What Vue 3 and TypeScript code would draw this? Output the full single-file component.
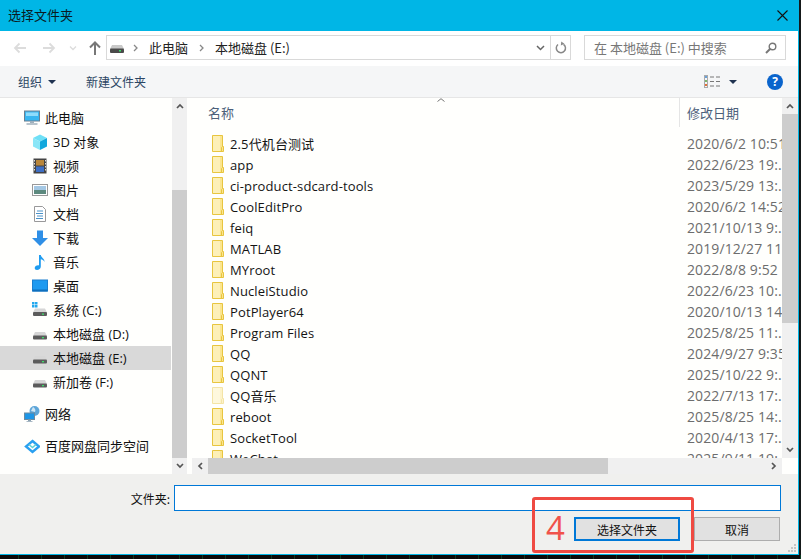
<script setup lang="ts">
interface NavItem { label: string; icon: string; indent: boolean; gap?: boolean; selected?: boolean }
const navItems: NavItem[] = [
  { label: '此电脑', icon: 'pc', indent: false },
  { label: '3D 对象', icon: 'cube', indent: true },
  { label: '视频', icon: 'film', indent: true },
  { label: '图片', icon: 'pic', indent: true },
  { label: '文档', icon: 'doc', indent: true },
  { label: '下载', icon: 'down', indent: true },
  { label: '音乐', icon: 'music', indent: true },
  { label: '桌面', icon: 'desk', indent: true },
  { label: '系统 (C:)', icon: 'sys', indent: true },
  { label: '本地磁盘 (D:)', icon: 'drive', indent: true },
  { label: '本地磁盘 (E:)', icon: 'drive', indent: true, selected: true },
  { label: '新加卷 (F:)', icon: 'drive', indent: true },
  { label: '网络', icon: 'net', indent: false, gap: true },
  { label: '百度网盘同步空间', icon: 'baidu', indent: false, gap: true },
]
interface FileRow { name: string; date: string; faded?: boolean }
const files: FileRow[] = [
  { name: '2.5代机台测试', date: '2020/6/2 10:51' },
  { name: 'app', date: '2022/6/23 19:..' },
  { name: 'ci-product-sdcard-tools', date: '2023/5/29 13:..' },
  { name: 'CoolEditPro', date: '2020/6/2 14:52' },
  { name: 'feiq', date: '2021/10/13 9:..' },
  { name: 'MATLAB', date: '2019/12/27 11..' },
  { name: 'MYroot', date: '2022/8/8 9:52' },
  { name: 'NucleiStudio', date: '2022/6/23 10:..' },
  { name: 'PotPlayer64', date: '2020/10/13 14..' },
  { name: 'Program Files', date: '2025/8/25 11:..' },
  { name: 'QQ', date: '2024/9/27 9:35' },
  { name: 'QQNT', date: '2025/10/22 9:..' },
  { name: 'QQ音乐', date: '2022/7/13 17:..', faded: true },
  { name: 'reboot', date: '2025/8/25 14:..' },
  { name: 'SocketTool', date: '2020/4/13 17:..' },
  { name: 'WeChat', date: '2025/9/11 19:..' },
]
</script>

<template>
  <div class="desk">
    <div class="win">
      <header class="title">
        <span class="title-text">选择文件夹</span>
        <svg class="close" width="11" height="11" viewBox="0 0 11 11"><path d="M0.500 0.500l10 10M10.500 0.500l-10 10" stroke="#111" stroke-width="1.100" fill="none" /></svg>
      </header>

      <div class="nav">
        <svg class="nav-arrow" width="13" height="12" viewBox="0 0 13 12"><path d="M13 6H2M6.500 1.500L2 6l4.500 4.500" stroke="#dcdcdc" stroke-width="1.800" fill="none" /></svg>
        <svg class="nav-arrow fwd" width="13" height="12" viewBox="0 0 13 12"><path d="M0 6h11M6.500 1.500L11 6l-4.500 4.500" stroke="#dcdcdc" stroke-width="1.800" fill="none" /></svg>
        <svg class="nav-chev" width="8" height="6" viewBox="0 0 8 6"><path d="M1 1.500L4 4.500l3-3" stroke="#dcdcdc" stroke-width="1.300" fill="none" /></svg>
        <svg class="nav-up" width="12" height="14" viewBox="0 0 12 14"><path d="M6 14V2M1 6.500l5-5 5 5" stroke="#777" stroke-width="2" fill="none" /></svg>
        <div class="address">
          <svg class="addr-drive" width="14" height="8" viewBox="0 0 14 8"><path d="M2 0h10l2 4H0z" fill="#c9c9c9" /><rect y="3.500" width="14" height="4.500" rx="1" fill="#4a4a4a" /><rect x="9" y="5" width="2" height="1.500" fill="#3ddc6a" /></svg>
          <svg class="crumb" width="5" height="8" viewBox="0 0 5 8"><path d="M1 1l3 3-3 3" stroke="#888" stroke-width="1.300" fill="none" /></svg>
          <span class="crumb-text">此电脑</span>
          <svg class="crumb" width="5" height="8" viewBox="0 0 5 8"><path d="M1 1l3 3-3 3" stroke="#888" stroke-width="1.300" fill="none" /></svg>
          <span class="crumb-text">本地磁盘 (E:)</span>
          <svg class="addr-drop" width="9" height="6" viewBox="0 0 9 6"><path d="M1 1l3.500 3.500L8 1" stroke="#666" stroke-width="1.500" fill="none" /></svg>
          <span class="addr-refresh">
            <svg width="12" height="13" viewBox="0 0 12 13"><path d="M8.500 3.300A4.600 4.600 0 1 1 3 3.500" stroke="#888" stroke-width="1.500" fill="none" /><path d="M6 0.500v4l3.400-2z" fill="#888" transform="rotate(6 6 3)" /></svg>
          </span>
        </div>
        <div class="search">
          <span>在 本地磁盘 (E:) 中搜索</span>
          <svg width="12" height="12" viewBox="0 0 12 12"><circle cx="7.500" cy="4.500" r="3.300" stroke="#777" stroke-width="1.400" fill="none" /><path d="M5 7L1 11" stroke="#777" stroke-width="2" /></svg>
        </div>
      </div>

      <div class="tools">
        <span class="tool">组织</span>
        <span class="caret" />
        <span class="tool new">新建文件夹</span>
        <svg class="view" width="16" height="13" viewBox="0 0 16 13">
          <rect x="0.500" y="0.500" width="3" height="12" fill="none" stroke="#aaa" />
          <rect x="1" y="1" width="2" height="2" fill="#6aa0d8" /><rect x="1" y="5" width="2" height="2" fill="#7cb66a" /><rect x="1" y="9" width="2" height="2" fill="#e0703a" />
          <path d="M6 2h4M12 2h4M6 6.500h4M12 6.500h4M6 11h4M12 11h4" stroke="#777" />
        </svg>
        <span class="caret view-caret" />
        <span class="help">?</span>
      </div>

      <main class="body">
        <aside class="side">
          <ul class="tree">
            <li v-for="item in navItems" :key="item.label" class="node" :class="{ indent: item.indent, gap: item.gap, selected: item.selected }">
              <svg class="node-icon" width="16" height="16" viewBox="0 0 16 16">
                <template v-if="item.icon === 'pc'">
                  <rect x="0.500" y="1" width="15" height="10" fill="#38b6f0" stroke="#6a7f90" /><rect x="2" y="2.500" width="12" height="3.500" fill="#8fdcfb" />
                  <rect x="6" y="11" width="4" height="2" fill="#9fb0bc" /><rect x="2.500" y="13" width="11" height="2" fill="#b8c4cc" />
                </template>
                <template v-else-if="item.icon === 'cube'">
                  <path d="M8 0.500L15 4 8 7.500 1 4z" fill="#6fe0f6" /><path d="M1 4l7 3.500V16L1 12.500z" fill="#8ae6f7" /><path d="M15 4L8 7.500V16l7-3.500z" fill="#12a8dc" />
                </template>
                <template v-else-if="item.icon === 'film'">
                  <rect x="1.500" y="0.500" width="13" height="15" fill="#444" /><rect x="4" y="2" width="8" height="5.500" fill="#b9863a" /><rect x="4" y="8.500" width="8" height="5.500" fill="#3e6fc4" />
                  <path d="M2.500 2v12M13.500 2v12" stroke="#ddd" stroke-dasharray="1.500 1.500" />
                </template>
                <template v-else-if="item.icon === 'pic'">
                  <rect x="0.500" y="2.500" width="15" height="11" fill="#fff" stroke="#999" /><rect x="2" y="4" width="12" height="4" fill="#a4c8e4" /><rect x="2" y="8" width="12" height="4" fill="#5d8a7e" />
                </template>
                <template v-else-if="item.icon === 'doc'">
                  <path d="M2.500 0.500H10.500L13.500 3.500V15.500H2.500z" fill="#fff" stroke="#999" /><path d="M5 5h6M4 7.500h7M5 10h6M4 12.500h7" stroke="#4a92c8" />
                </template>
                <template v-else-if="item.icon === 'down'">
                  <path d="M5 0.500h6V8h5L8 16 0 8h5z" fill="#2f8fe6" />
                </template>
                <template v-else-if="item.icon === 'music'">
                  <path d="M7 1h1.800c.4 3 4 3.500 3.700 7-.8-2-2.500-2.500-3.700-2.700V12.500C8.800 14.500 7 16 5 16c-1.500 0-2.300-1-2.300-2 0-1.700 2-3 4.300-2.600z" fill="#1f9cf0" />
                </template>
                <template v-else-if="item.icon === 'desk'">
                  <rect x="0.500" y="2" width="15" height="11" fill="#1e9af0" stroke="#1b7fd0" /><rect x="0.500" y="11.500" width="15" height="2" fill="#0f6fbc" />
                </template>
                <template v-else-if="item.icon === 'sys'">
                  <rect x="0" y="0" width="2.500" height="2.500" fill="#22a8ee" /><rect x="3" y="0" width="2.500" height="2.500" fill="#22a8ee" /><rect x="0" y="3" width="2.500" height="2.500" fill="#22a8ee" /><rect x="3" y="3" width="2.500" height="2.500" fill="#22a8ee" />
                  <path d="M3 6.500h10l2 4H1z" fill="#d6d6d6" /><rect x="1" y="10" width="14" height="4" rx="1" fill="#5c5c5c" /><rect x="10" y="11.500" width="2" height="1.300" fill="#3ddc6a" />
                </template>
                <template v-else-if="item.icon === 'drive'">
                  <path d="M3 6h10l2 4H1z" fill="#d6d6d6" /><rect x="1" y="9.500" width="14" height="4" rx="1" fill="#5c5c5c" /><rect x="10" y="11" width="2" height="1.300" fill="#3ddc6a" />
                </template>
                <template v-else-if="item.icon === 'net'">
                  <circle cx="10.500" cy="5" r="5" fill="#5ea6d8" /><path d="M9 1c2 1 3 3 2 5l-4-1z" fill="#cfe6f4" />
                  <rect x="0.500" y="7" width="10" height="6.500" fill="#1e96e6" stroke="#6a8aa0" /><rect x="4" y="13.500" width="3" height="1.500" fill="#8aa0b0" /><rect x="2.500" y="15" width="6" height="1" fill="#a8b8c4" />
                </template>
                <template v-else>
                  <path d="M8.500 3L15 8.500 8.500 14 2 8.500z" fill="none" stroke="#2aa0f0" stroke-width="2.400" /><path d="M5 6.500L8.500 9.500 12 6.500" fill="none" stroke="#5fd0d8" stroke-width="1.600" />
                </template>
              </svg>
              <span class="node-label">{{ item.label }}</span>
            </li>
          </ul>
          <div class="vbar side-bar">
            <span class="arr"><svg width="8" height="6" viewBox="0 0 8 6"><path d="M1 5l3-3 3 3" stroke="#555" stroke-width="1.700" fill="none" /></svg></span>
            <span class="spacer-top" />
            <span class="thumb" />
            <span class="arr"><svg width="8" height="6" viewBox="0 0 8 6"><path d="M1 1l3 3 3-3" stroke="#555" stroke-width="1.700" fill="none" /></svg></span>
          </div>
        </aside>

        <section class="pane">
          <div class="pane-top">
            <div class="listing">
              <div class="heads">
                <span class="head-name">名称<svg class="sort" width="8" height="4" viewBox="0 0 8 4"><path d="M0.500 3.500L4 0.700 7.500 3.500" stroke="#777" fill="none" /></svg></span>
                <span class="head-date">修改日期</span>
              </div>
              <div v-for="f in files" :key="f.name" class="row">
                <svg class="folder" :class="{ faded: f.faded }" width="12" height="17" viewBox="0 0 12 17">
                  <path d="M0.500 0.500H10.500V11.500H11.500V16.500H0.500z" fill="#fbe58e" stroke="#e8c53f" />
                  <path d="M1 1H8V16H1z" fill="#fdf0b8" />
                  <path d="M9.500 16.500v-4l1-1" fill="none" stroke="#e8c53f" />
                </svg>
                <span class="fname">{{ f.name }}</span>
                <span class="fdate">{{ f.date }}</span>
              </div>
            </div>
            <div class="vbar list-bar">
              <span class="arr"><svg width="8" height="6" viewBox="0 0 8 6"><path d="M1 5l3-3 3 3" stroke="#555" stroke-width="1.700" fill="none" /></svg></span>
              <span class="thumb" />
              <span class="track" />
              <span class="arr"><svg width="8" height="6" viewBox="0 0 8 6"><path d="M1 1l3 3 3-3" stroke="#555" stroke-width="1.700" fill="none" /></svg></span>
            </div>
          </div>
          <div class="hbar">
            <span class="harr"><svg width="6" height="8" viewBox="0 0 6 8"><path d="M5 1L2 4l3 3" stroke="#555" stroke-width="1.700" fill="none" /></svg></span>
            <span class="hthumb" />
            <span class="htrack" />
            <span class="harr"><svg width="6" height="8" viewBox="0 0 6 8"><path d="M1 1l3 3-3 3" stroke="#555" stroke-width="1.700" fill="none" /></svg></span>
            <span class="hcorner" />
          </div>
        </section>
      </main>

      <footer class="foot">
        <div class="field">
          <label class="field-label">文件夹:</label>
          <div class="field-input" />
        </div>
        <div class="actions">
          <button class="btn primary">选择文件夹</button>
          <button class="btn">取消</button>
        </div>
        <svg class="grip" width="9" height="9" viewBox="0 0 9 9"><path d="M6 0h2v2H6zM3 3h2v2H3zM6 3h2v2H6zM0 6h2v2H0zM3 6h2v2H3zM6 6h2v2H6z" fill="#c4c4c4" /></svg>
        <div class="mark"><span>4</span></div>
      </footer>
    </div>
    <div class="strip" />
  </div>
</template>

<style>
html, body { margin: 0; background: #111; }
</style>

<style scoped>
.desk { width: 801px; height: 559px; background: #15191a; overflow: hidden; font-family: "Open Sans", "Noto Sans CJK SC", sans-serif; font-size: 13px; color: #111; }
.desk * { box-sizing: border-box; }
.win { width: 799px; height: 555px; display: flex; flex-direction: column; background: #f0f0ee; border-right: 1px solid #00b6e6; border-bottom: 1px solid #00b6e6; }
.strip { height: 4px; background: repeating-linear-gradient(90deg, #0a0a0a 0 18px, #0d3a22 18px 19px, #0a0a0a 19px 23px); }

.title { height: 31px; flex: none; background: #00b6e6; display: flex; align-items: center; justify-content: space-between; padding: 0 10px 0 8px; font-family: "Noto Sans CJK SC", sans-serif; color: #0a1a22; }
.title-text { padding-bottom: 2px; }
.close { flex: none; }

.nav { height: 35px; flex: none; background: #fff; display: flex; align-items: flex-start; position: relative; }
.nav-arrow { margin: 11px 0 0 13px; }
.nav-arrow.fwd { margin-left: 17px; }
.nav-chev { margin: 14px 0 0 13px; }
.nav-up { margin: 10px 0 0 12px; }
.address { margin: 4px 0 0 5px; width: 465px; height: 25px; border: 1px solid #d9d9d9; display: flex; align-items: center; padding-left: 3px; font-family: "Noto Sans CJK SC", sans-serif; }
.addr-drive { margin-top: 3px; }
.crumb { margin-left: 9px; flex: none; }
.crumb-text { margin-left: 11px; color: #222; }
.crumb-text + .crumb { margin-left: 11px; }
.addr-drop { margin-left: auto; margin-right: 5px; }
.addr-refresh { width: 20px; height: 100%; border-left: 1px solid #d9d9d9; display: flex; align-items: center; justify-content: center; }
.search { margin: 4px 0 0 13px; width: 202px; height: 25px; border: 1px solid #d9d9d9; display: flex; align-items: center; justify-content: space-between; padding: 0 8px 0 9px; color: #777; font-family: "Noto Sans CJK SC", sans-serif; white-space: nowrap; }

.tools { height: 32px; flex: none; background: #f5f6f7; border-bottom: 1px solid #e6e6e6; display: flex; align-items: center; font-family: "Noto Sans CJK SC", sans-serif; }
.tool { color: #2b4563; font-size: 12px; }
.tool:first-child { margin-left: 18px; }
.tool.new { margin-left: 30px; }
.caret { width: 0; height: 0; border-left: 4px solid transparent; border-right: 4px solid transparent; border-top: 4px solid #1f3250; margin-left: 6px; }
.view { margin-left: auto; }
.view-caret { margin-left: 9px; }
.help { width: 16px; height: 16px; border-radius: 50%; background: #0a64cc; color: #fff; font: 700 12px/16px "Open Sans", sans-serif; text-align: center; margin: 0 15px 0 30px; }

.body { height: 376px; flex: none; display: flex; background: #fffffd; }
.side { width: 187px; flex: none; display: flex; }
.tree { width: 172px; margin: 0; padding: 8px 0 0; list-style: none; overflow: hidden; }
.node { height: 24px; display: flex; align-items: center; padding-left: 24px; gap: 5px; white-space: nowrap; }
.node.indent { padding-left: 32px; }
.node.gap { margin-top: 8px; }
.node.selected { background: #d9d9d9; width: 171px; }
.node-icon { flex: none; }
.node-label { padding-bottom: 2px; }

.vbar { width: 15px; flex: none; display: flex; flex-direction: column; background: #f0f0f0; }
.arr { height: 16px; flex: none; display: flex; align-items: center; justify-content: center; }
.spacer-top { height: 76px; flex: none; }
.side-bar .thumb { flex: 1; background: #cdcdcd; }
.list-bar { width: 16px; }
.list-bar .thumb { height: 209px; flex: none; background: #cdcdcd; }
.list-bar .track { flex: 1; }

.pane { flex: 1; min-width: 0; margin-left: 5px; display: flex; flex-direction: column; }
.pane-top { flex: 1; min-height: 0; display: flex; }
.listing { flex: 1; min-width: 0; overflow: hidden; }
.heads { height: 35px; display: flex; color: #4c607a; font-family: "Noto Sans CJK SC", sans-serif; }
.head-name { width: 488px; height: 29px; padding: 6px 0 0 16px; border-right: 1px solid #e5e5e5; position: relative; line-height: 18px; }
.sort { position: absolute; left: 245px; top: 0; }
.head-date { padding: 6px 0 0 7px; line-height: 18px; }
.row { height: 21px; display: flex; align-items: center; padding-left: 20px; }
.folder { flex: none; margin-right: 6px; }
.folder.faded { opacity: 0.45; }
.fname { width: 457px; flex: none; white-space: nowrap; color: #141414; letter-spacing: 0.12px; }
.fdate { flex: 1; min-width: 0; overflow: hidden; white-space: nowrap; color: #6d6d6d; font-size: 14px; letter-spacing: 0.1px; }

.hbar { height: 16px; flex: none; display: flex; }
.harr { width: 16px; flex: none; background: #f0f0f0; display: flex; align-items: center; justify-content: center; }
.hthumb { width: 400px; flex: none; background: #cdcdcd; }
.htrack { flex: 1; background: #f0f0f0; }
.hcorner { width: 16px; flex: none; background: #fffffd; }

.foot { flex: 1; position: relative; padding: 11px 17px 0 0; font-family: "Noto Sans CJK SC", sans-serif; }
.field { display: flex; align-items: center; height: 26px; }
.field-label { width: 174px; padding-right: 4px; text-align: right; font-size: 12px; }
.field-input { flex: 1; height: 26px; background: #fff; border: 1px solid #0078d7; }
.actions { margin-top: 6px; display: flex; justify-content: flex-end; gap: 14px; padding-right: 1px; }
.btn { height: 24px; width: 86px; background: #e1e1e1; border: 1px solid #adadad; font: inherit; font-size: 12px; color: #111; padding: 0; }
.btn.primary { width: 106px; border: 2px solid #0078d7; }
.grip { position: absolute; right: 1px; bottom: 1px; }
.mark { position: absolute; left: 532px; top: 23px; width: 162px; height: 56px; border: 3px solid #ef4a42; border-radius: 3px; padding-left: 11px; display: flex; align-items: center; }
.mark span { font: 400 33px/1 "Open Sans", sans-serif; color: #f0524a; margin-top: 4px; }
</style>
